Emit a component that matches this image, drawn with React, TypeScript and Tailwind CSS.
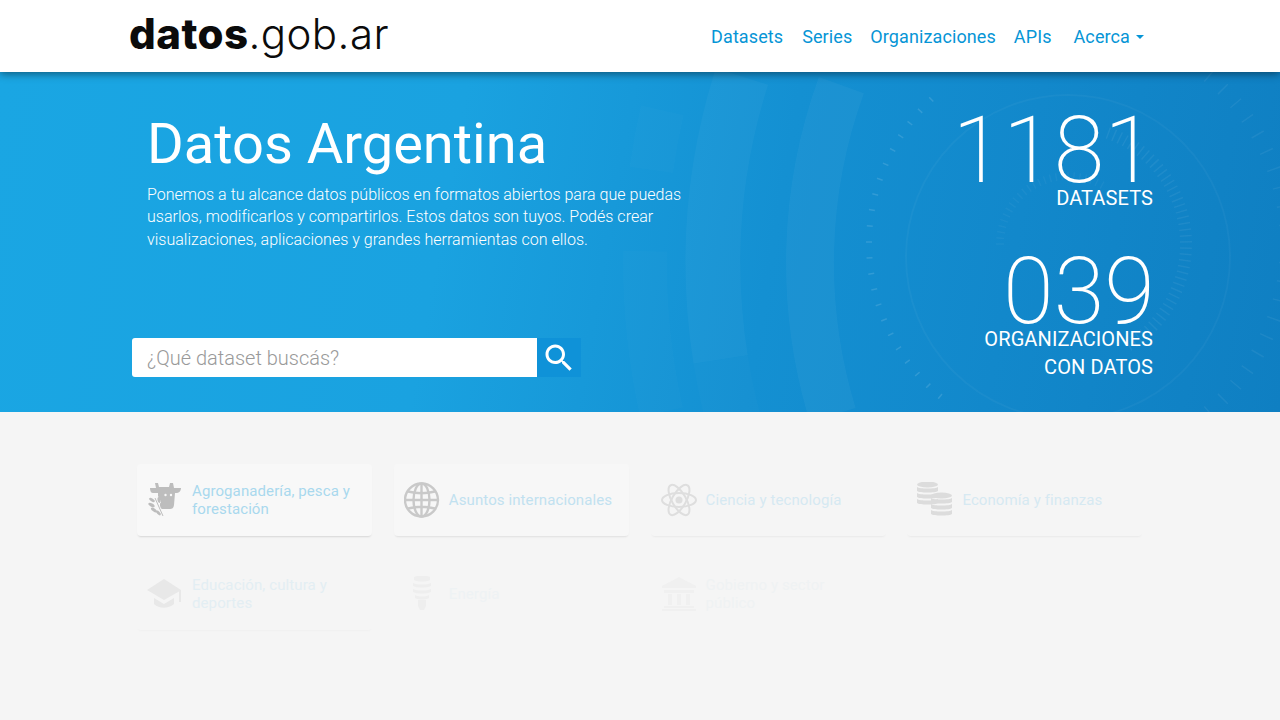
import type { ReactNode } from 'react';

const navItems = [
  { label: 'Datasets', className: 'ml-0' },
  { label: 'Series', className: 'ml-[19px]' },
  { label: 'Organizaciones', className: 'ml-[18px]' },
  { label: 'APIs', className: 'ml-[18px]' },
];

function arc(cx: number, cy: number, r: number, a0: number, a1: number) {
  const p = (a: number) => {
    const t = (a * Math.PI) / 180;
    return `${(cx + r * Math.cos(t)).toFixed(1)} ${(cy + r * Math.sin(t)).toFixed(1)}`;
  };
  return `M${p(a0)} A${r} ${r} 0 0 1 ${p(a1)}`;
}

function ticks(r: number, len: number, from: number, to: number, step: number) {
  const out: string[] = [];
  for (let a = from; a <= to; a += step) {
    const t = (a * Math.PI) / 180;
    const x0 = 1068 + r * Math.cos(t);
    const y0 = 172 + r * Math.sin(t);
    const x1 = 1068 + (r + len) * Math.cos(t);
    const y1 = 172 + (r + len) * Math.sin(t);
    out.push(`M${x0.toFixed(1)} ${y0.toFixed(1)}L${x1.toFixed(1)} ${y1.toFixed(1)}`);
  }
  return out.join('');
}

function HeroBackdrop() {
  return (
    <svg className="absolute inset-0 h-full w-full" viewBox="0 0 1280 340" fill="none">
      <path d={arc(1330, 191, 617, 171, 197.600)} stroke="#fff" strokeOpacity="0.032" strokeWidth="55" />
      <path d={arc(1330, 191, 617, 160, 171)} stroke="#fff" strokeOpacity="0.015" strokeWidth="55" />
      <path d={arc(1330, 191, 520, 163, 200)} stroke="#fff" strokeOpacity="0.035" strokeWidth="48" />
      <path d={arc(1330, 191, 685, 187.800, 192.900)} stroke="#fff" strokeOpacity="0.016" strokeWidth="44" />
      <path d={arc(1330, 191, 685, 167.400, 181)} stroke="#fff" strokeOpacity="0.016" strokeWidth="44" />
      <path d={ticks(196, 6, 130, 230, 4.600)} stroke="#fff" strokeOpacity="0.13" strokeWidth="1.500" />
      <path d={ticks(212, 14, -80, 90, 5)} stroke="#fff" strokeOpacity="0.06" strokeWidth="1.500" />
      <circle cx="1068" cy="185" r="162" stroke="#fff" strokeOpacity="0.035" strokeWidth="2" />
      <path d={ticks(112, 12, -70, 60, 3)} stroke="#fff" strokeOpacity="0.06" strokeWidth="1.500" />
      <path d={ticks(64, 8, 180, 300, 5)} stroke="#fff" strokeOpacity="0.04" strokeWidth="1.500" />
    </svg>
  );
}

function CowIcon() {
  return (
    <svg viewBox="0 0 36 36" className="h-9 w-9" fill="currentColor">
      <path d="M8 1h3l1 4h10l1-4h3l1 5h7c0 3-2 5-5 5h-1l-1 12c-.3 3-2 4-4 4h-8l-1-1c1-5-1-9-3-12V11H6C4 11 3 9 3 6h6z" />
      <circle cx="18.500" cy="13" r="1.200" fill="#f8f8f8" />
      <circle cx="24" cy="13" r="1.200" fill="#f8f8f8" />
      <path d="M8 16l8 18" stroke="currentColor" strokeWidth="1" fill="none" />
      <ellipse cx="5" cy="18" rx="3.200" ry="1.500" transform="rotate(30 5 18)" />
      <ellipse cx="4.500" cy="23" rx="3.500" ry="1.600" transform="rotate(30 4.500 23)" />
      <ellipse cx="7" cy="28" rx="3.500" ry="1.600" transform="rotate(35 7 28)" />
      <ellipse cx="11.500" cy="31" rx="3" ry="1.400" transform="rotate(45 11.500 31)" />
      <ellipse cx="12" cy="18" rx="1.500" ry="3" transform="rotate(-10 12 18)" />
      <ellipse cx="14.500" cy="23.500" rx="1.500" ry="3" transform="rotate(-10 14.500 23.500)" />
    </svg>
  );
}

function GlobeIcon() {
  return (
    <svg viewBox="0 0 36 36" className="h-9 w-9" fill="none" stroke="currentColor" strokeWidth="2.400">
      <circle cx="17.500" cy="18" r="16.500" />
      <ellipse cx="17.500" cy="18" rx="8" ry="16.500" />
      <path d="M17.500 2v32M1.500 18h32M4 9.500c8 2 19 2 27 0M4 26.500c8-2 19-2 27 0" />
    </svg>
  );
}

function AtomIcon() {
  return (
    <svg viewBox="0 0 36 36" className="h-9 w-9" fill="none" stroke="currentColor" strokeWidth="2">
      <ellipse cx="18" cy="18" rx="17" ry="7" />
      <ellipse cx="18" cy="18" rx="17" ry="7" transform="rotate(60 18 18)" />
      <ellipse cx="18" cy="18" rx="17" ry="7" transform="rotate(120 18 18)" />
      <circle cx="18" cy="18" r="3.500" fill="currentColor" stroke="none" />
    </svg>
  );
}

function CoinsIcon() {
  const stack = (x: number, y: number) => (
    <g>
      <ellipse cx={x + 10.500} cy={y + 2.500} rx="10.500" ry="3" />
      <path d={`M${x} ${y + 5}c2 2 19 2 21 0v4c-2 2-19 2-21 0z`} />
      <path d={`M${x} ${y + 11}c2 2 19 2 21 0v4c-2 2-19 2-21 0z`} />
      <path d={`M${x} ${y + 17}c2 2 19 2 21 0v4c-2 2-19 2-21 0z`} />
    </g>
  );
  return (
    <svg viewBox="0 0 36 36" className="h-9 w-9" fill="currentColor">
      {stack(0, 0)}
      {stack(14, 11)}
    </svg>
  );
}

function CapIcon() {
  return (
    <svg viewBox="0 0 36 36" className="h-9 w-9" fill="currentColor">
      <path d="M17 3 0 14l17 10 15-8.500V26h2V14zM7 22v6c5 5 14 5 20 0v-6l-10 6z" />
    </svg>
  );
}

function BulbIcon() {
  return (
    <svg viewBox="0 0 36 36" className="h-9 w-9" fill="currentColor">
      <path d="M10 1c4-2 12-2 16 0v3c-4 2-12 2-16 0zm-1 6c4 2 14 2 18 0v3c-4 2-14 2-18 0zm0 6c4 2 14 2 18 0v3c-4 2-14 2-18 0zm2 6c4 2 10 2 14 0v3c-4 2-10 2-14 0zm3 5h8v6l-2 4h-4l-2-4z" />
    </svg>
  );
}

function BankIcon() {
  return (
    <svg viewBox="0 0 36 36" className="h-9 w-9" fill="currentColor">
      <path d="M18 1 1 10v2h34v-2zM3 14h30v3H3zM7 18h4v11H7zm9 0h4v11h-4zm9 0h4v11h-4zM3 30h30v2H3zm-2 3h34v2H1z" />
    </svg>
  );
}

const categories: { label: string; icon: ReactNode; card: string; iconTone: string; textTone: string }[] = [
  { label: 'Agroganadería, pesca y forestación', icon: <CowIcon />, card: 'bg-[#f8f8f8] shadow-[0_2px_2px_-1px_rgba(0,0,0,0.13)]', iconTone: 'text-[#bdbdbd]', textTone: 'text-[#a9d8ee]' },
  { label: 'Asuntos internacionales', icon: <GlobeIcon />, card: 'bg-[#f7f7f7] shadow-[0_2px_2px_-1px_rgba(0,0,0,0.09)]', iconTone: 'text-[#c9c9c9]', textTone: 'text-[#c1e1f0]' },
  { label: 'Ciencia y tecnología', icon: <AtomIcon />, card: 'shadow-[0_2px_2px_-1px_rgba(0,0,0,0.05)]', iconTone: 'text-[#dedede]', textTone: 'text-[#d6e9f2]' },
  { label: 'Economía y finanzas', icon: <CoinsIcon />, card: 'shadow-[0_2px_2px_-1px_rgba(0,0,0,0.05)]', iconTone: 'text-[#dcdcdc]', textTone: 'text-[#d6e9f2]' },
  { label: 'Educación, cultura y deportes', icon: <CapIcon />, card: 'shadow-[0_2px_2px_-1px_rgba(0,0,0,0.025)]', iconTone: 'text-[#e8e8e8]', textTone: 'text-[#e3eef3]' },
  { label: 'Energía', icon: <BulbIcon />, card: '', iconTone: 'text-[#eeeeee]', textTone: 'text-[#eef2f4]' },
  { label: 'Gobierno y sector público', icon: <BankIcon />, card: '', iconTone: 'text-[#f0f0f0]', textTone: 'text-[#eff2f3]' },
];

function CategoryCard({ label, icon, card, iconTone, textTone }: { label: string; icon: ReactNode; card: string; iconTone: string; textTone: string }) {
  return (
    <div className={`flex h-[72px] w-[235px] items-center rounded-sm pl-[10px] pr-4 ${card}`}>
      <span className={`shrink-0 ${iconTone}`}>{icon}</span>
      <span className={`ml-[9px] text-[15px] leading-[18px] tracking-[0.1px] ${textTone}`}>{label}</span>
    </div>
  );
}

export default function App() {
  return (
    <div className="relative h-[720px] w-full overflow-hidden bg-[#f5f5f5] font-['Roboto',sans-serif]">
      <header className="relative z-10 flex h-[72px] items-center justify-between bg-white pl-[129px] pr-[136px] shadow-[0_2px_8px_rgba(0,0,0,0.45)]">
        <div className="mt-[-4px] flex items-baseline font-['Inter',sans-serif] text-[42px] leading-none tracking-[0.45px] text-[#0b0b0b]">
          <span className="font-extrabold">datos</span>
          <span className="font-light">.gob.ar</span>
        </div>
        <nav className="flex items-center text-[18px] tracking-[0.1px] text-[#0695d6]">
          {navItems.map((item) => (
            <a key={item.label} className={item.className}>{item.label}</a>
          ))}
          <a className="ml-[22px] flex items-center">
            Acerca
            <span className="ml-[6px] mt-[2px] h-0 w-0 border-x-[4px] border-t-[4px] border-x-transparent border-t-[#0695d6]" />
          </a>
        </nav>
      </header>

      <section className="relative h-[340px] bg-[linear-gradient(100deg,#1aa6e3_0%,#1aa2e0_35%,#1490d2_60%,#1288cb_78%,#0f7fc2_100%)]">
        <HeroBackdrop />
        <div className="relative flex h-full justify-between pl-[132px] pr-[127px]">
          <div className="flex flex-col">
            <h1 className="ml-[15px] mt-[37px] text-[56px] font-[380] leading-[70px] text-white">Datos Argentina</h1>
            <p className="ml-[15px] mt-[4.600px] w-[550px] text-[16px] font-light leading-[22.500px] tracking-[0.02px] text-white">
              Ponemos a tu alcance datos públicos en formatos abiertos para que puedas usarlos, modificarlos y compartirlos. Estos datos son tuyos. Podés crear visualizaciones, aplicaciones y grandes herramientas con ellos.
            </p>
            <div className="mt-[87.400px] flex h-[39px] w-[449px]">
              <div className="flex w-[405px] items-center rounded-l-[3px] bg-white pl-[15px] pt-[1px] text-[20px] font-light text-[#999]">¿Qué dataset buscás?</div>
              <button className="flex w-[44px] items-center justify-center bg-[#0f92d8]">
                <svg viewBox="0 0 24 24" className="h-[36px] w-[36px]" fill="#fff">
                  <path d="M15.500 14h-.79l-.28-.27C15.410 12.590 16 11.110 16 9.500 16 5.910 13.090 3 9.500 3S3 5.910 3 9.500 5.910 16 9.500 16c1.610 0 3.090-.59 4.230-1.570l.27.28v.79l5 4.990L20.490 19l-4.990-5zm-6 0C7.010 14 5 11.990 5 9.500S7.010 5 9.500 5 14 7.010 14 9.500 11.990 14 9.500 14z" />
                </svg>
              </button>
            </div>
          </div>
          <div className="flex flex-col items-end text-right text-white">
            <div className="mr-[-2px] mt-[34px] text-[92px] font-extralight leading-[90px]">1181</div>
            <div className="mt-[-12px] text-[20px] font-normal leading-[28px] tracking-[0.1px]">DATASETS</div>
            <div className="mr-[-2px] mt-[35px] text-[92px] font-extralight leading-[90px]">039</div>
            <div className="mt-[-12px] text-[20px] font-normal leading-[28px] tracking-[0.1px]">
              ORGANIZACIONES
              <br />
              CON DATOS
            </div>
          </div>
        </div>
      </section>

      <main className="grid grid-cols-[repeat(4,235px)] gap-x-[21.800px] gap-y-[22px] pl-[137px] pt-[52px]">
        {categories.map((c) => (
          <CategoryCard key={c.label} {...c} />
        ))}
      </main>
    </div>
  );
}
